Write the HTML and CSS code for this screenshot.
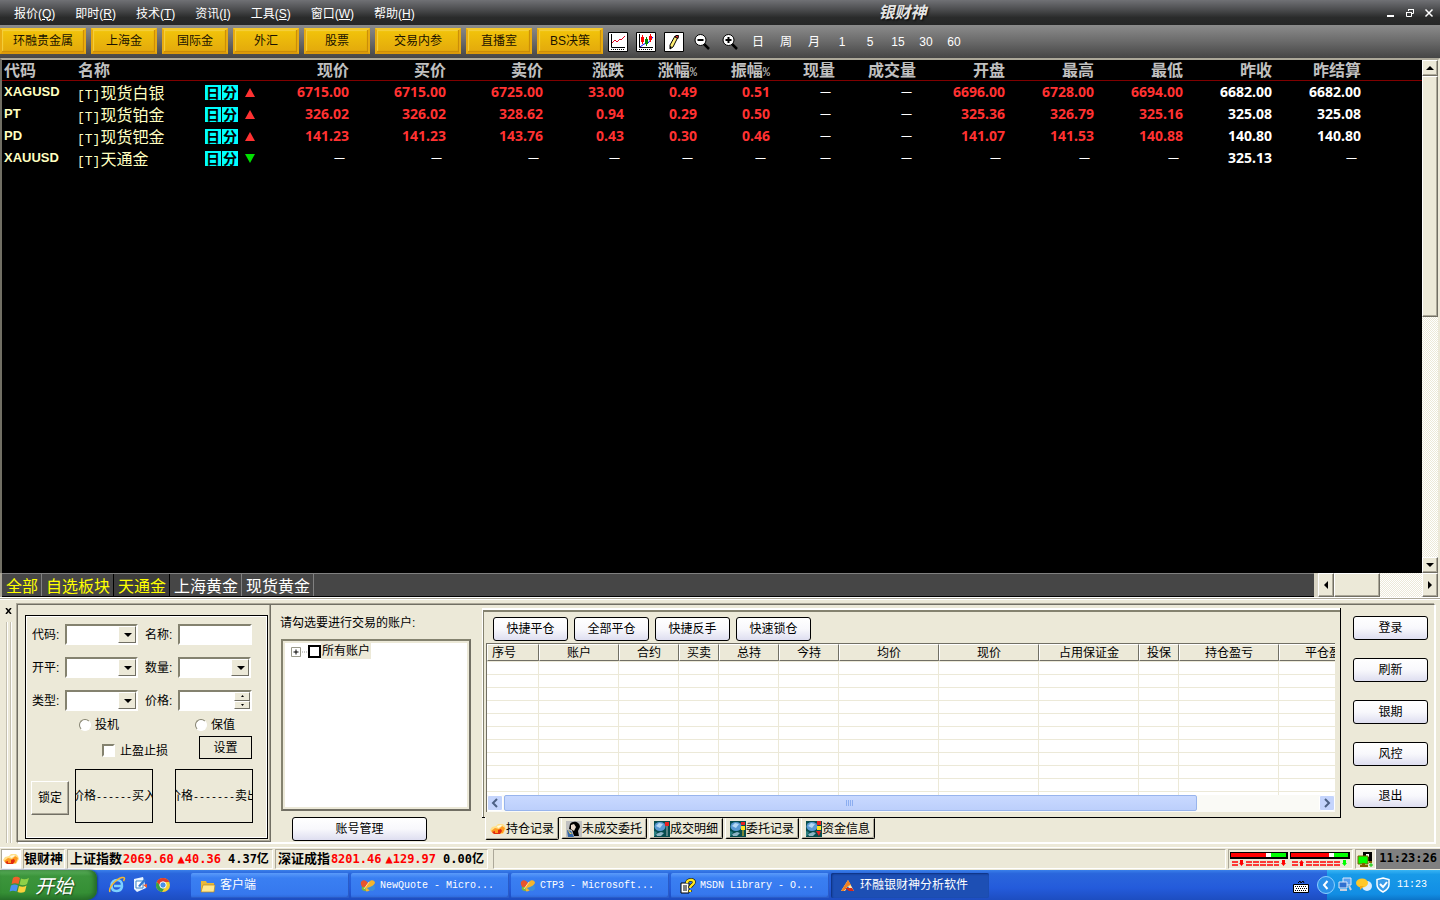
FILE: index.html
```html
<!DOCTYPE html>
<html lang="zh-CN">
<head>
<meta charset="utf-8">
<title>环融银财神分析软件</title>
<link rel="stylesheet" href="styles.css">
</head>
<body>
<svg class="defs" aria-hidden="true">
  <symbol id="ingot" viewBox="0 0 16 16"><path d="M0 9l2-3 4-1 2-2 5 0 2 2 1 3-3 5-10 0z" fill="#ffe08a"/><path d="M1 10l4-3 4 1 3-3 3 2-2 5-8 1z" fill="#ff9a20"/><path d="M2 11l3-1 0 2 3 0 0-3 3-1 1 2-2 3-6 0z" fill="#e02c10"/><path d="M7 5l4-1 1 1-4 2z" fill="#fffbe0"/></symbol>
  <symbol id="vs" viewBox="0 0 16 16"><path d="M1 4c2-3 5-2 7 1l3 5-3 3-3-1C3 10 0 7 1 4z" fill="#e8552c"/><path d="M15 5c0-3-4-4-6-1L4 11c1 3 4 3 6 1z" fill="#f6b42c"/><path d="M10 9l4-2c2 2 1 6-2 6-2 0-4-2-5-3z" fill="#3f8fd8"/><path d="M2 9l3 0 1 4c-3 0-5-1-4-4z" fill="#78b83c"/><path d="M9 4L4 11" stroke="#fff0c0" stroke-width=".8"/></symbol>
  <symbol id="globe" viewBox="0 0 16 16"><path fill="#064c4e" d="M0 0h16v16H0z"/><ellipse cx="6" cy="5.500" rx="5.500" ry="4.500" fill="#5a9ad4"/><path d="M2 5l3-3 4 1-3 4z" fill="#b4d8f4"/><path d="M2 13l5-2 3 1-3 3H3z" fill="#8cb4c4"/><path d="M0 10l3 1-2 4H0z" fill="#2b7f80"/></symbol>
</svg>

<header class="menubar">
  <nav class="menu">
    <a href="#">报价(<u>Q</u>)</a><a href="#">即时(<u>R</u>)</a><a href="#">技术(<u>T</u>)</a><a href="#">资讯(<u>I</u>)</a><a href="#">工具(<u>S</u>)</a><a href="#">窗口(<u>W</u>)</a><a href="#">帮助(<u>H</u>)</a>
  </nav>
  <h1 class="brand">银财神</h1>
  <div class="winctl">
    <button aria-label="最小化"><svg width="10" height="10"><path d="M1 8h7" stroke="#fff" stroke-width="2"/></svg></button>
    <button aria-label="还原"><svg width="10" height="10" fill="none" stroke="#fff"><path d="M3.500 3V1.500h5v4H7M3 1.500h6M1.500 4.500h5v4h-5zM1 4.500h6"/></svg></button>
    <button aria-label="关闭"><svg width="10" height="10"><path d="M1.500 1.500l7 7M8.500 1.500l-7 7" stroke="#fff" stroke-width="1.500"/></svg></button>
  </div>
</header>

<div class="toolbar">
  <div class="gold-group">
    <button class="gold wide">环融贵金属</button><button class="gold">上海金</button><button class="gold">国际金</button><button class="gold">外汇</button><button class="gold">股票</button><button class="gold wide">交易内参</button><button class="gold">直播室</button><button class="gold">BS决策</button>
  </div>
  <div class="tools">
  <button class="tool" aria-label="分时图"><svg width="20" height="20"><path d="M.5.500h19v19H.5z" fill="#fff" stroke="#000"/><path d="M3.500 2v13.500H17" fill="none" stroke="#000"/><path d="M4 11l3-3 2 2 3-3 1 1 4-4" fill="none" stroke="#e00020"/><path d="M3 17.500h14" stroke="#000" stroke-dasharray="1 1"/></svg></button>
  <button class="tool" aria-label="K线图"><svg width="20" height="20"><path d="M.5.500h19v19H.5z" fill="#fff" stroke="#000"/><path d="M3.500 2v13.500H17" fill="none" stroke="#000"/><path d="M4 15l4-3 4-1 5-6" fill="none" stroke="#00f"/><path d="M6.500 3v9M14.500 2v8" stroke="#f00"/><path d="M5 5h3v5H5zM13 4h3v4h-3z" fill="#f00"/><path d="M10.500 5v9" stroke="#080"/><path d="M9 7h3v5H9z" fill="#080"/><path d="M3 17.500h14" stroke="#000" stroke-dasharray="1 1"/></svg></button>
  <button class="tool" aria-label="画线"><svg width="20" height="20"><path d="M.5.500h19v19H.5z" fill="#fff" stroke="#000"/><path d="M11 4l3 1-5 10-3 2 0-4z" fill="#ffee70" stroke="#000"/><path d="M11 5l1-1.500h2.500l-.5 3z" fill="#f03030" stroke="#000"/><path d="M6 14l2 1-2 2z"/></svg></button>
  <button class="tool" aria-label="缩小"><svg width="18" height="18"><path d="M11 11l5 5" stroke="#000" stroke-width="2.500"/><circle cx="7.500" cy="7" r="5.500" fill="#fff" stroke="#000"/><path d="M4.500 7h6" stroke="#000" stroke-width="2"/></svg></button>
  <button class="tool" aria-label="放大"><svg width="18" height="18"><path d="M11 11l5 5" stroke="#000" stroke-width="2.500"/><circle cx="7.500" cy="7" r="5.500" fill="#fff" stroke="#000"/><path d="M4.500 7h6M7.500 4v6" stroke="#000" stroke-width="2"/></svg></button>
  <button class="tool">日</button><button class="tool">周</button><button class="tool">月</button><button class="tool">1</button><button class="tool">5</button><button class="tool">15</button><button class="tool">30</button><button class="tool">60</button>
  </div>
</div>

<main class="quotes">
  <div class="sheet">
    <table class="prices">
      <colgroup><col class="c-code"><col class="c-name"><col class="c-flag"><col class="c-first"><col class="c-97"><col class="c-97"><col class="c-81"><col class="c-73"><col class="c-73"><col class="c-65"><col class="c-81"><col class="c-89"><col class="c-89"><col class="c-89"><col class="c-89"><col class="c-89"><col></colgroup>
      <thead><tr><th>代码</th><th>名称</th><th></th><th>现价</th><th>买价</th><th>卖价</th><th>涨跌</th><th>涨幅<small>%</small></th><th>振幅<small>%</small></th><th>现量</th><th>成交量</th><th>开盘</th><th>最高</th><th>最低</th><th>昨收</th><th>昨结算</th><th></th></tr></thead>
      <tbody>
        <tr><td>XAGUSD</td><td><i>[T]</i>现货白银</td><td><span class="flags"><b>日</b><b>分</b><em class="up"></em></span></td><td>6715.00</td><td>6715.00</td><td>6725.00</td><td>33.00</td><td>0.49</td><td>0.51</td><td class="nil">—</td><td class="nil">—</td><td>6696.00</td><td>6728.00</td><td>6694.00</td><td class="w">6682.00</td><td class="w">6682.00</td><td></td></tr>
        <tr><td>PT</td><td><i>[T]</i>现货铂金</td><td><span class="flags"><b>日</b><b>分</b><em class="up"></em></span></td><td>326.02</td><td>326.02</td><td>328.62</td><td>0.94</td><td>0.29</td><td>0.50</td><td class="nil">—</td><td class="nil">—</td><td>325.36</td><td>326.79</td><td>325.16</td><td class="w">325.08</td><td class="w">325.08</td><td></td></tr>
        <tr><td>PD</td><td><i>[T]</i>现货钯金</td><td><span class="flags"><b>日</b><b>分</b><em class="up"></em></span></td><td>141.23</td><td>141.23</td><td>143.76</td><td>0.43</td><td>0.30</td><td>0.46</td><td class="nil">—</td><td class="nil">—</td><td>141.07</td><td>141.53</td><td>140.88</td><td class="w">140.80</td><td class="w">140.80</td><td></td></tr>
        <tr><td>XAUUSD</td><td><i>[T]</i>天通金</td><td><span class="flags"><b>日</b><b>分</b><em class="down"></em></span></td><td class="nil">—</td><td class="nil">—</td><td class="nil">—</td><td class="nil">—</td><td class="nil">—</td><td class="nil">—</td><td class="nil">—</td><td class="nil">—</td><td class="nil">—</td><td class="nil">—</td><td class="nil">—</td><td class="w">325.13</td><td class="nil">—</td><td></td></tr>
      </tbody>
    </table>
  </div>
  <div class="vscroll">
    <button class="sb" aria-label="向上"><svg width="8" height="4"><path d="M4 0l4 4H0z"/></svg></button>
    <div class="track v"><div class="thumb"></div></div>
    <button class="sb" aria-label="向下"><svg width="8" height="4"><path d="M4 4l4-4H0z"/></svg></button>
  </div>
</main>

<div class="sheetbar">
  <div class="sheets">
    <button class="fav">全部</button><button class="fav">自选板块</button><button class="fav on">天通金</button><button>上海黄金</button><button>现货黄金</button>
  </div>
  <div class="hscroll">
    <button class="sb" aria-label="向左"><svg width="4" height="8"><path d="M0 4l4-4v8z"/></svg></button>
    <div class="track h"><div class="thumb"></div></div>
    <button class="sb" aria-label="向右"><svg width="4" height="8"><path d="M4 4L0 0v8z"/></svg></button>
  </div>
</div>

<section class="dock">
  <div class="grip"><button aria-label="关闭面板"><svg width="7" height="6"><path d="M1 0l5 6M6 0L1 6" stroke="#000" stroke-width="1.500"/></svg></button><span></span></div>
  <div class="frame">
    <form class="order">
      <div class="order-box">
        <div class="fields">
          <label for="code">代码:</label><span class="combo"><select id="code"><option></option></select></span>
          <label for="name">名称:</label><input class="txt" id="name" type="text">
          <label for="oc">开平:</label><span class="combo"><select id="oc"><option></option></select></span>
          <label for="qty">数量:</label><span class="combo"><select id="qty"><option></option></select></span>
          <label for="kind">类型:</label><span class="combo"><select id="kind"><option></option></select></span>
          <label for="price">价格:</label><span class="spin"><input id="price" type="text"><span class="arrows"><button type="button" aria-label="增加"><svg width="3" height="2"><path d="M0 2h3L1.500 0z"/></svg></button><button type="button" aria-label="减少"><svg width="3" height="2"><path d="M0 0h3L1.500 2z"/></svg></button></span></span>
        </div>
        <div class="radios"><label><input type="radio" name="mode">投机</label><label><input type="radio" name="mode">保值</label></div>
        <div class="stop"><label><input type="checkbox">止盈止损</label><button type="button" class="line-btn">设置</button></div>
        <div class="deal"><button type="button" class="lock">锁定</button><button type="button" class="line-btn big"><span>价格<i>------</i>买入</span></button><button type="button" class="line-btn big"><span>价格<i>-------</i>卖出</span></button></div>
      </div>
    </form>

    <div class="accounts">
      <p>请勾选要进行交易的账户:</p>
      <div class="tree"><label><svg width="18" height="11"><path d="M.5 1.500h9v9h-9z" fill="#fff" stroke="#9a9a8c"/><path d="M2.500 6h5M5 3.500v5" stroke="#000"/><path d="M11 6h5" stroke="#999" stroke-dasharray="1 1"/></svg><input type="checkbox"><span>所有账户</span></label></div>
      <button class="xp">账号管理</button>
    </div>

    <div class="positions">
      <div class="pos-frame">
        <div class="pos-actions"><button class="xp">快捷平仓</button><button class="xp">全部平仓</button><button class="xp">快捷反手</button><button class="xp">快速锁仓</button></div>
        <div class="list">
          <table>
            <colgroup><col class="p-53"><col class="p-80"><col class="p-60"><col class="p-40"><col class="p-60"><col class="p-60"><col class="p-100"><col class="p-100"><col class="p-100"><col class="p-40"><col class="p-100"><col class="p-100"></colgroup>
            <thead><tr><th>序号</th><th>账户</th><th>合约</th><th>买卖</th><th>总持</th><th>今持</th><th>均价</th><th>现价</th><th>占用保证金</th><th>投保</th><th>持仓盈亏</th><th>平仓盈亏</th></tr></thead>
            <tbody><tr><td></td><td></td><td></td><td></td><td></td><td></td><td></td><td></td><td></td><td></td><td></td><td></td></tr></tbody>
          </table>
        </div>
        <div class="luna">
          <button aria-label="向左滚动"><svg width="8" height="10"><path d="M6 1L2 5l4 4" fill="none" stroke="#4d6185" stroke-width="2"/></svg></button>
          <div class="luna-track"><div class="luna-thumb"><svg width="8" height="6"><path d="M.5 0v6M2.500 0v6M4.500 0v6M6.500 0v6" stroke="#8caef0"/></svg></div></div>
          <button aria-label="向右滚动"><svg width="8" height="10"><path d="M2 1l4 4-4 4" fill="none" stroke="#4d6185" stroke-width="2"/></svg></button>
        </div>
      </div>
      <div class="pos-tabs">
        <button class="on"><svg width="16" height="16"><use href="#ingot"/></svg>持仓记录</button>
        <button><svg width="16" height="16"><path fill="#c0c0c0" d="M0 0h16v16H0z"/><path d="M4 3c3-4 10-2 10 3l-2 4 1 5H8L6 9 3 8z" fill="#000"/><path d="M5 4l3-1 2 3-2 4-3-2z" fill="#e9d9cc"/><path d="M1 9l4 1 3 6H2z" fill="#3467a8"/><path d="M1 8l3 5 2 0z" fill="#e8cf60"/></svg>未成交委托</button>
        <button><svg width="16" height="16"><use href="#globe"/><path d="M11 1h4v4h-4z" fill="#e82020"/><path d="M13 5v10" stroke="#a8b8b8"/></svg>成交明细</button>
        <button><svg width="16" height="16"><use href="#globe"/><path d="M11 1h4v3h-4z" fill="#e82020"/><path d="M11 5h4v4h-4z" fill="#ffe020"/><path d="M13 9v6" stroke="#e8c020"/></svg>委托记录</button>
        <button><svg width="16" height="16"><use href="#globe"/><path d="M11 0h4v4h-4zM10 10h5l-2 5z" fill="#e82020"/><path d="M11 5h4v4h-4z" fill="#ffe020"/></svg>资金信息</button>
      </div>
    </div>

    <div class="side"><button class="xp">登录</button><button class="xp">刷新</button><button class="xp">银期</button><button class="xp">风控</button><button class="xp">退出</button></div>
  </div>
</section>

<footer class="status">
  <div class="cell logo"><svg width="16" height="16"><use href="#ingot"/></svg></div>
  <div class="cell name">银财神</div>
  <div class="cell idx"><span>上证指数</span><b>2069.60</b><b class="chg">▲40.36</b><span class="amt">4.37亿</span></div>
  <div class="cell idx"><span>深证成指</span><b>8201.46</b><b class="chg">▲129.97</b><span class="amt">0.00亿</span></div>
  <div class="cell fill"></div>
  <div class="cell gauges">
    <svg width="58" height="17"><path d="M0 1h58v7H0z"/><path d="M1 2h36v4H1z" fill="#f00"/><path d="M36 2h5v4h-5z" fill="#fff"/><path d="M41 2h15v4H41z" fill="#0f0"/><path d="M2 11h6M2 14h6M16 11h33M16 14h33" stroke="#f00" stroke-width="1.600" stroke-dasharray="6 1"/><path d="M10 9h3v3h1l-2.500 3L9 12h1zM52 9h3v3h1l-2.500 3L51 12h1z" fill="#f00"/></svg>
    <svg width="60" height="17"><path d="M0 1h60v7H0z"/><path d="M1 2h38v4H1z" fill="#f00"/><path d="M39 2h5v4h-5z" fill="#fff"/><path d="M44 2h14v4H44z" fill="#0f0"/><path d="M2 11h6M2 14h6M16 11h34M16 14h34" stroke="#f00" stroke-width="1.600" stroke-dasharray="6 1"/><path d="M10 15h3v-3h1l-2.500-3L9 12h1z" fill="#f00"/><path d="M53 9h3v3h1l-2.500 3L52 12h1z" fill="#0f0"/></svg>
  </div>
  <div class="cell net"><svg width="17" height="17"><path d="M6 1h9v9H6z" fill="#000"/><path d="M9 3h3v3H9z" fill="#fff"/><path d="M12 10h3v2h-3z" fill="#806000"/><path d="M1 5h10v8H1z" fill="#0f0" stroke="#806000"/><path d="M3 15h8M5 13h3" stroke="#806000" stroke-width="2"/><path d="M12 14h4M14 12v4" stroke="#0c0"/></svg></div>
  <time class="clock">11:23:26</time>
</footer>

<div class="taskbar">
  <button class="start"><svg width="22" height="20" viewBox="0 0 22 20"><path d="M4 3c3-2 5-1 7 0L9.500 9C7 8 5 8 2.500 9z" fill="#f0602c"/><path d="M12 3.500c2 1 5 1 8-.5l-2 6c-2 1.500-5 1.500-7.500.5z" fill="#8fd048"/><path d="M2 10.500c3-1.500 5-1 7 0l-1.500 6C5 15.500 3 15.500.5 16.500z" fill="#4a90f0"/><path d="M10 11c3 1 5 1 7.500-.5l-1.500 6c-2 1.500-5 1.500-7.500.5z" fill="#fbd13c"/></svg><span>开始</span></button>
  <div class="quick">
    <button aria-label="浏览器"><svg width="18" height="18"><path d="M14 11c-1 3-3 4-5.500 4-3 0-5-2-5-5.500S6 4 9 4s5.500 2 5 6H6" fill="none" stroke="#7cd0ff" stroke-width="2.500"/><path d="M2 16C0 12 8 3 14 1.500c3-.5 3 1 1.500 3.500" fill="none" stroke="#f4b830" stroke-width="1.500"/></svg></button>
    <button aria-label="显示桌面"><svg width="18" height="18"><path d="M3 3l9-2 3 11-9 4-3-3z" fill="#e8f4ff"/><path d="M5 5h7v7H5z" fill="#fff" stroke="#3b86c8"/><path d="M7 10l6-7 2 1-6 7z" fill="#3078d0"/><path d="M12 9l4-1 0 4z" fill="#f06030"/></svg></button>
    <button aria-label="Chrome"><svg width="18" height="18"><circle cx="9" cy="9" r="7" fill="#f8d030"/><path d="M2.800 5.800A7 7 0 0 1 15.300 6H9L6 10z" fill="#e03c2c"/><path d="M2.700 6A7 7 0 0 0 8 16l3-5-4-.5z" fill="#38a048"/><circle cx="9" cy="9" r="3.200" fill="#4a90e8" stroke="#fff"/></svg></button>
  </div>
  <div class="tasks">
    <button><svg width="16" height="16"><path d="M1 3h5l1 2h7v9H1z" fill="#e8b838"/><path d="M1 14l2-7h12l-1 7z" fill="#ffe890" stroke="#b88820" stroke-width=".7"/></svg><span>客户端</span></button>
    <button><svg width="16" height="16"><use href="#vs"/></svg><span>NewQuote - Micro...</span></button>
    <button><svg width="16" height="16"><use href="#vs"/></svg><span>CTP3 - Microsoft...</span></button>
    <button><svg width="16" height="16"><path d="M1 5h8v10H1z" fill="#fff" stroke="#000"/><path d="M3 8h4M3 10h4M3 12h4" stroke="#000"/><path d="M7 5c0-4 7-4 7-1 0 3-4 3-4 6M10 12v2" fill="none" stroke="#000" stroke-width="3.500"/><path d="M7 5c0-4 7-4 7-1 0 3-4 3-4 6M10 12v2" fill="none" stroke="#ffe820" stroke-width="2.500"/></svg><span>MSDN Library - O...</span></button>
    <button class="on"><svg width="16" height="16"><path d="M8 2l6 11h-4L8 8l-3 5H1z" fill="#ffe8b0"/><path d="M8 2l3 5-3 1-4 5H1z" fill="#f08020"/><path d="M5 10h7l2 3H9z" fill="#d82818"/></svg><span>环融银财神分析软件</span></button>
  </div>
  <svg class="kbd" width="16" height="14"><path d="M5 3l2-2 1 2 2-2 1 2" fill="none" stroke="#000"/><path d="M.5 4.500h15v8H.5z" fill="#fff" stroke="#000"/><path d="M2 6.500h12M3 8.500h11M2 10.500h12" stroke="#000" stroke-dasharray="1 1"/></svg>
  <div class="tray">
    <button class="expand" aria-label="展开"><svg width="18" height="18"><circle cx="9" cy="9" r="8.500" fill="#2a90e8" stroke="#8cd0ff"/><path d="M10.500 5L7 9l3.500 4" fill="none" stroke="#fff" stroke-width="2"/></svg></button>
    <svg width="16" height="16"><path d="M6 1h8v7H6z" fill="#5aa0f0" stroke="#dce8f8"/><path d="M2 5h8v6H2z" fill="#3070d0" stroke="#dce8f8"/><path d="M3 13h7M12 9l2 4" stroke="#c8d0e0" stroke-width="2"/></svg>
    <svg width="18" height="16"><circle cx="12" cy="9" r="5" fill="#d8ecff"/><ellipse cx="7" cy="6" rx="6" ry="4.500" fill="#ffc828"/><path d="M5 9l0 4 4-4z" fill="#f0a818"/></svg>
    <svg width="16" height="16"><path d="M8 1l6 1.500v5c0 4-3 6-6 7.500C5 13.500 2 11.500 2 7.500v-5z" fill="#3a9ce8" stroke="#fff" stroke-width="1.500"/><path d="M5 7l3 3 4-5" fill="none" stroke="#fff" stroke-width="2"/></svg>
    <time>11:23</time>
  </div>
</div>
</body>
</html>
```
FILE: styles.css
```css
* { box-sizing: border-box; }

body {
  margin: 0;
  height: 100vh;
  display: flex;
  flex-direction: column;
  overflow: hidden;
  background: #ece9d8;
  color: #000;
  font: 12px/16px "Liberation Sans", "Noto Sans CJK SC", sans-serif;
}

button {
  margin: 0;
  padding: 0;
  border: 0;
  background: none;
  color: inherit;
  font: inherit;
  white-space: nowrap;
}

svg { display: block; flex: none; }
.defs { position: absolute; width: 0; height: 0; }

/* title and menu */
.menubar {
  display: grid;
  grid-template-columns: 61% 1fr auto;
  align-items: center;
  height: 25px;
  background: linear-gradient(#707175, #4a4b4d 40%, #2a2b2b 70%, #262727);
  color: #fff;
}
.menu { display: flex; gap: 20px; padding: 2px 0 0 14px; }
.menu a { color: #fff; text-decoration: none; white-space: nowrap; }
.brand {
  margin: 0;
  font: italic bold 16px/22px "Liberation Serif", "Noto Sans CJK SC", serif;
  color: #e4e4e4;
  text-shadow: 1px 1px 2px #000;
}
.winctl { display: flex; gap: 9px; padding-right: 6px; }

/* toolbar */
.toolbar {
  display: flex;
  align-items: center;
  gap: 1px;
  height: 33px;
  background: linear-gradient(#8c8c8c, #6a6a6a 50%, #454545);
  color: #fff;
}
.gold-group { display: flex; gap: 5px; }
.gold {
  width: 66px;
  height: 26px;
  margin-top: -1px;
  background: linear-gradient(#f2c40a, #e3a90c);
  border: 2px solid #e8ab10;
  border-top-color: #f6c828;
  border-bottom-color: #dc9a08;
  box-shadow: inset -1px -1px 1px #c88a08, inset 1px 1px 1px #f4d040;
  color: #1a1200;
}
.gold.wide { width: 86px; }
.tools { display: flex; }
.tool { display: flex; align-items: center; justify-content: center; width: 28px; height: 28px; }

/* quotes */
.quotes {
  flex: 1;
  min-height: 0;
  display: flex;
  background: #000;
  border-top: 2px solid #aca899;
  border-left: 2px solid #716f64;
  border-right: 2px solid #ece9d8;
}
.sheet { flex: 1; min-width: 0; }
.prices { width: 100%; table-layout: fixed; border-collapse: separate; border-spacing: 0; font-family: "Noto Sans", "Noto Sans CJK SC", sans-serif; }
.c-code { width: 74px; } .c-name { width: 129px; } .c-flag { width: 54px; } .c-first { width: 90px; }
.c-97 { width: 97px; } .c-89 { width: 89px; } .c-81 { width: 81px; } .c-73 { width: 73px; } .c-65 { width: 65px; }
.prices th {
  height: 21px;
  padding: 0;
  border-bottom: 1px solid #800000;
  color: #c0c0c0;
  font: bold 16px/18px "Noto Sans CJK SC", sans-serif;
  text-align: right;
  vertical-align: top;
  white-space: nowrap;
}
.prices th small { font: 12px/12px "Liberation Mono", monospace; }
.prices th:nth-child(-n+2), .prices td:nth-child(-n+2) { text-align: left; }
.prices th:nth-child(-n+2), .prices td:nth-child(-n+2) { padding-left: 2px; }
.prices td {
  height: 22px;
  padding: 0;
  color: #ff3232;
  font-size: 14px;
  font-weight: bold;
  line-height: 20px;
  text-align: right;
  white-space: nowrap;
}
.prices td:nth-child(1) { color: #ffffc0; font-family: "Liberation Sans", sans-serif; font-size: 13px; }
.prices td:nth-child(2) { padding-left: 1px; color: #ffffc0; font-family: "Noto Sans CJK SC", sans-serif; font-size: 16px; font-weight: normal; }
.prices td i { font: 13px/12px "Liberation Mono", monospace; }
.prices td.w { color: #fff; }
.prices td.nil { color: #fff; font-size: 11px; font-weight: normal; line-height: 18px; padding-right: 4px; padding-bottom: 2px; }
.flags { display: flex; align-items: center; gap: 1px; }
.flags b { width: 16px; height: 15px; background: #0ff; color: #000; font: bold 14px/14px "Noto Sans CJK SC", sans-serif; text-align: center; }
.flags em { margin-left: 6px; border: 5px solid transparent; }
.flags .up { border-top: 0; border-bottom: 9px solid #ff3232; }
.flags .down { border-bottom: 0; border-top: 9px solid #00e000; }

/* classic scroll bars */
.vscroll { display: flex; flex-direction: column; width: 16px; }
.sb, .thumb {
  background: #ece9d8;
  border: 1px solid;
  border-color: #fff #716f64 #716f64 #fff;
  box-shadow: inset -1px -1px #aca899;
}
.sb { display: flex; align-items: center; justify-content: center; width: 16px; height: 16px; flex: none; }
.track { flex: 1; background: repeating-conic-gradient(#fff 0 25%, #ece9d8 0 50%) 0 0 / 2px 2px; }
.track.v .thumb { height: 50%; }
.track.h .thumb { width: 46px; height: 100%; }

/* sheet tabs */
.sheetbar { display: flex; height: 24px; border-left: 2px solid #aca899; border-right: 2px solid #ece9d8; background: #464646; }
.sheets { flex: 1; display: flex; border-top: 1px solid #808080; border-bottom: 1px solid #000; }
.sheets button {
  padding: 0 3px 0 4px;
  border-right: 1px solid #808080;
  color: #fff;
  font: 16px/20px "Noto Sans CJK SC", sans-serif;
}
.sheets .fav { color: #ff0; }
.sheets .on { background: #3c3c3c; border-right-color: #000; box-shadow: -1px 0 #000; }
.hscroll { display: flex; width: 124px; border-left: 4px solid #d8d4c4; background: #ece9d8; }
.hscroll .sb { height: 24px; }

/* trading dock */
.dock { display: flex; padding: 2px 5px 4px 0; border-top: 1px solid #fff; box-shadow: inset 0 1px #aca899, inset 0 2px #fff; }
.grip { display: flex; flex-direction: column; align-items: center; gap: 8px; width: 17px; padding-top: 8px; }
.grip span { flex: 1; width: 5px; border: solid #c4c0b0; border-width: 0 1px; box-shadow: inset 1px 0 #fff, 1px 0 #fff; }
.frame {
  flex: 1;
  min-width: 0;
  display: flex;
  margin-top: 4px;
  border: 1px solid;
  border-color: #716f64 #fff #fff #716f64;
  box-shadow: -1px -1px #aca899, 1px 1px #fff;
}
.order { width: 253px; padding: 10px 2px 2px 7px; border-right: 1px solid #716f64; border-bottom: 1px solid #716f64; box-shadow: inset -1px -1px #aca899; }
.order-box { border: 1px solid #000; outline: 1px solid #fff; outline-offset: -2px; padding-bottom: 15px; }
.fields { display: grid; grid-template-columns: 33px 79px 34px 75px; grid-auto-rows: 33px; align-items: center; padding: 2px 0 0 6px; }
.fields label:nth-of-type(even) { padding-left: 1px; }
.combo { position: relative; display: block; height: 21px; width: 73px; }
.combo select, .txt, .spin {
  width: 100%;
  height: 21px;
  margin: 0;
  padding: 0 2px;
  appearance: none;
  border: 2px solid;
  border-color: #84826f #fff #fff #84826f;
  border-radius: 0;
  background: #fff;
  font: inherit;
}
.txt { width: 74px; }
.combo::before {
  content: "";
  position: absolute;
  top: 2px; right: 2px; bottom: 2px;
  width: 16px;
  background: #ece9d8;
  border: 1px solid;
  border-color: #fff #716f64 #716f64 #fff;
  pointer-events: none;
}
.combo::after {
  content: "";
  position: absolute;
  top: 9px; right: 6px;
  border: 4px solid transparent;
  border-top-color: #000;
  border-bottom: 0;
  pointer-events: none;
}
.spin { display: flex; width: 74px; padding: 0; }
.spin input { flex: 1; min-width: 0; border: 0; padding: 0; }
.arrows { display: flex; flex-direction: column; width: 16px; }
.arrows button { flex: 1; display: flex; align-items: center; justify-content: center; background: #ece9d8; border: 1px solid; border-color: #fff #716f64 #716f64 #fff; }
.radios { display: flex; gap: 76px; padding-left: 53px; height: 16px; }
.radios label, .stop label { display: flex; align-items: center; gap: 4px; }
.radios input, .stop input {
  appearance: none;
  width: 13px;
  height: 13px;
  margin: 0;
  background: #fff;
  border: 2px solid;
  border-color: #84826f #fff #fff #84826f;
}
.radios input { width: 12px; height: 12px; border-width: 1px; border-radius: 50%; }
.stop { display: flex; align-items: center; justify-content: space-between; padding: 3px 15px 0 76px; }
.stop label { gap: 5px; padding-top: 6px; }
.line-btn { width: 53px; height: 23px; border: 1px solid #000; }
.line-btn.big { display: flex; align-items: center; justify-content: center; width: 78px; height: 54px; overflow: hidden; }
.line-btn.big span { flex: none; }
.line-btn.big i { font: 10px/12px "Liberation Mono", monospace; }
.deal { display: flex; padding: 10px 14px 0 5px; }
.lock { width: 38px; height: 34px; margin: 12px 6px 0 0; border: 1px solid; border-color: #fff #716f64 #716f64 #fff; box-shadow: inset -1px -1px #aca899; }
.deal .big + .big { margin-left: 22px; }

.xp {
  width: 75px;
  height: 24px;
  border: 1px solid #000;
  border-radius: 3px;
  background: linear-gradient(#fff, #f8f8fc 50%, #dedef0);
}
.accounts { width: 200px; padding: 10px 0 0 9px; }
.accounts p { margin: 0 0 8px; white-space: nowrap; }
.tree { height: 172px; width: 190px; margin-left: 1px; padding: 2px; background: #fff; border: 2px solid; border-color: #84826f #716f64 #716f64 #84826f; outline: 2px solid #ece9d8; outline-offset: -4px; }
.tree label { display: flex; align-items: center; padding-left: 6px; }
.tree input { appearance: none; width: 13px; height: 13px; margin: 0 0 0 -1px; border: 2px solid #000; background: #fff; }
.tree span { padding: 0 1px; background: #ece9d8; }
.accounts .xp { width: 135px; margin: 6px 0 0 12px; }

/* positions */
.positions { flex: 1; min-width: 0; margin-left: 11px; padding-top: 3px; }
.pos-frame { border-right: 1px solid #000; border-bottom: 1px solid #000; padding: 3px 5px 5px 4px; box-shadow: inset 1px 2px #fff, inset 2px 4px #84826f; }
.pos-actions { display: flex; gap: 6px; padding: 6px 0 2px 7px; }
.list { height: 152px; overflow: hidden; border-top: 1px solid #716f64; border-left: 1px solid #716f64; background: #fff; }
.list table { width: 892px; table-layout: fixed; border-collapse: separate; border-spacing: 0; height: 100%; }
.p-53 { width: 52px; } .p-80 { width: 80px; } .p-60 { width: 60px; } .p-40 { width: 40px; } .p-100 { width: 100px; }
.list th {
  height: 17px;
  padding: 0;
  background: #ece9d8;
  border: 1px solid;
  border-color: #fff #716f64 #716f64 #fff;
  font-weight: normal;
  line-height: 14px;
  white-space: nowrap;
}
.list th:first-child { text-align: left; padding-left: 4px; }
.list td { padding: 0; border-right: 1px solid #ece9d8; }
.list tbody tr { background: repeating-linear-gradient(#ece9d8 0 1px, transparent 1px 13px); }
.luna { display: flex; height: 17px; border-left: 1px solid #716f64; background: #fafaf6; }
.luna button { display: flex; align-items: center; justify-content: center; width: 16px; height: 16px; border: 1px solid #fff; border-radius: 2px; background: #c4d4fc; }
.luna-track { flex: 1; padding-left: 1px; }
.luna-thumb { display: flex; align-items: center; justify-content: center; width: 85%; height: 16px; border: 1px solid #98b4ec; border-radius: 2px; background: linear-gradient(#c9d9ff, #bccffb); }
.pos-tabs { display: flex; gap: 2px; padding-left: 3px; }
.pos-tabs button {
  display: flex;
  align-items: center;
  height: 21px;
  padding: 0 4px;
  border: 1px solid;
  border-color: transparent #000 #000 #fff;
  border-radius: 0 0 2px 2px;
  box-shadow: inset -1px -1px #aca899;
}
.pos-tabs .on { height: 23px; margin-top: -1px; background: #ece9d8; }
.side { display: flex; flex-direction: column; gap: 18px; width: 93px; padding: 11px 6px 0 12px; }

/* status bar */
.status { display: flex; align-items: stretch; gap: 2px; height: 23px; padding: 1px 0; background: #ece9d8; border-top: 1px solid #fff; font-weight: bold; font-size: 13px; }
.cell { display: flex; align-items: center; border: 1px solid; border-color: #aca899 #fff #fff #aca899; white-space: nowrap; }
.cell.logo { padding: 0 1px; background: #fff; margin-left: 1px; }
.cell.name { padding: 0 1px 0 0; }
.idx { padding: 0 3px 0 2px; font-family: "DejaVu Sans Mono", "Noto Sans CJK SC", monospace; }
.idx b, .amt { font-size: 12px; }
.idx b { color: #f00; padding-left: 1px; }
.idx .chg { padding-left: 4px; }
.idx .amt { padding-left: 7px; }
.cell.fill { flex: 1; }
.cell.idx + .cell.fill { margin-left: 3px; }
.gauges { gap: 2px; padding: 0 2px 0 1px; }
.net { padding: 0 1px; }
.clock { padding: 0 3px; margin-left: -2px; background: #808080; font: bold 12px/19px "DejaVu Sans Mono", monospace; }

/* taskbar */
.taskbar { display: flex; height: 30px; background: linear-gradient(#3a80ea, #2a66dc 12%, #245bdb 60%, #1d4dc0); color: #fff; }
.start {
  display: flex;
  align-items: center;
  gap: 4px;
  width: 97px;
  padding-left: 9px;
  border-radius: 0 8px 10px 0;
  background: linear-gradient(#62b862, #3c953c 20%, #358f35 75%, #28742a);
  box-shadow: inset -3px 0 4px #256a28, 1px 0 2px #143c98;
  font: italic 19px/24px "Noto Sans CJK SC", sans-serif;
  text-shadow: 1px 1px 1px #204a20;
}
.quick { display: flex; align-items: center; gap: 5px; padding-left: 11px; }
.tasks { flex: 1; display: flex; gap: 2px; margin-left: 19px; padding: 3px 0 2px; min-width: 0; }
.tasks button {
  display: flex;
  align-items: center;
  gap: 4px;
  flex: 0 1 158px;
  min-width: 0;
  padding-left: 9px;
  border-radius: 2px;
  background: linear-gradient(#5a9bfa, #3a7ff2 20%, #3678ee 85%, #2c66d8);
  box-shadow: inset -1px -1px #2a5cc8;
  font: 10px/16px "Liberation Mono", "Noto Sans CJK SC", monospace;
}
.tasks button:first-child span, .tasks .on span { font-size: 12px; }
.tasks .on { background: #1d4fb4; box-shadow: inset 1px 1px 2px #0c2f7c; }
.kbd { align-self: center; margin: 4px 9px 0 0; }
.tray { display: flex; align-items: center; gap: 2px; padding-right: 13px; background: linear-gradient(#38b4f4, #189ae8 15%, #128ee4 80%, #0c74c8); margin-left: 9px; }
.expand { margin-left: -10px; }
.tray time { margin-left: 4px; font: 10px/16px "Liberation Mono", monospace; }
```
